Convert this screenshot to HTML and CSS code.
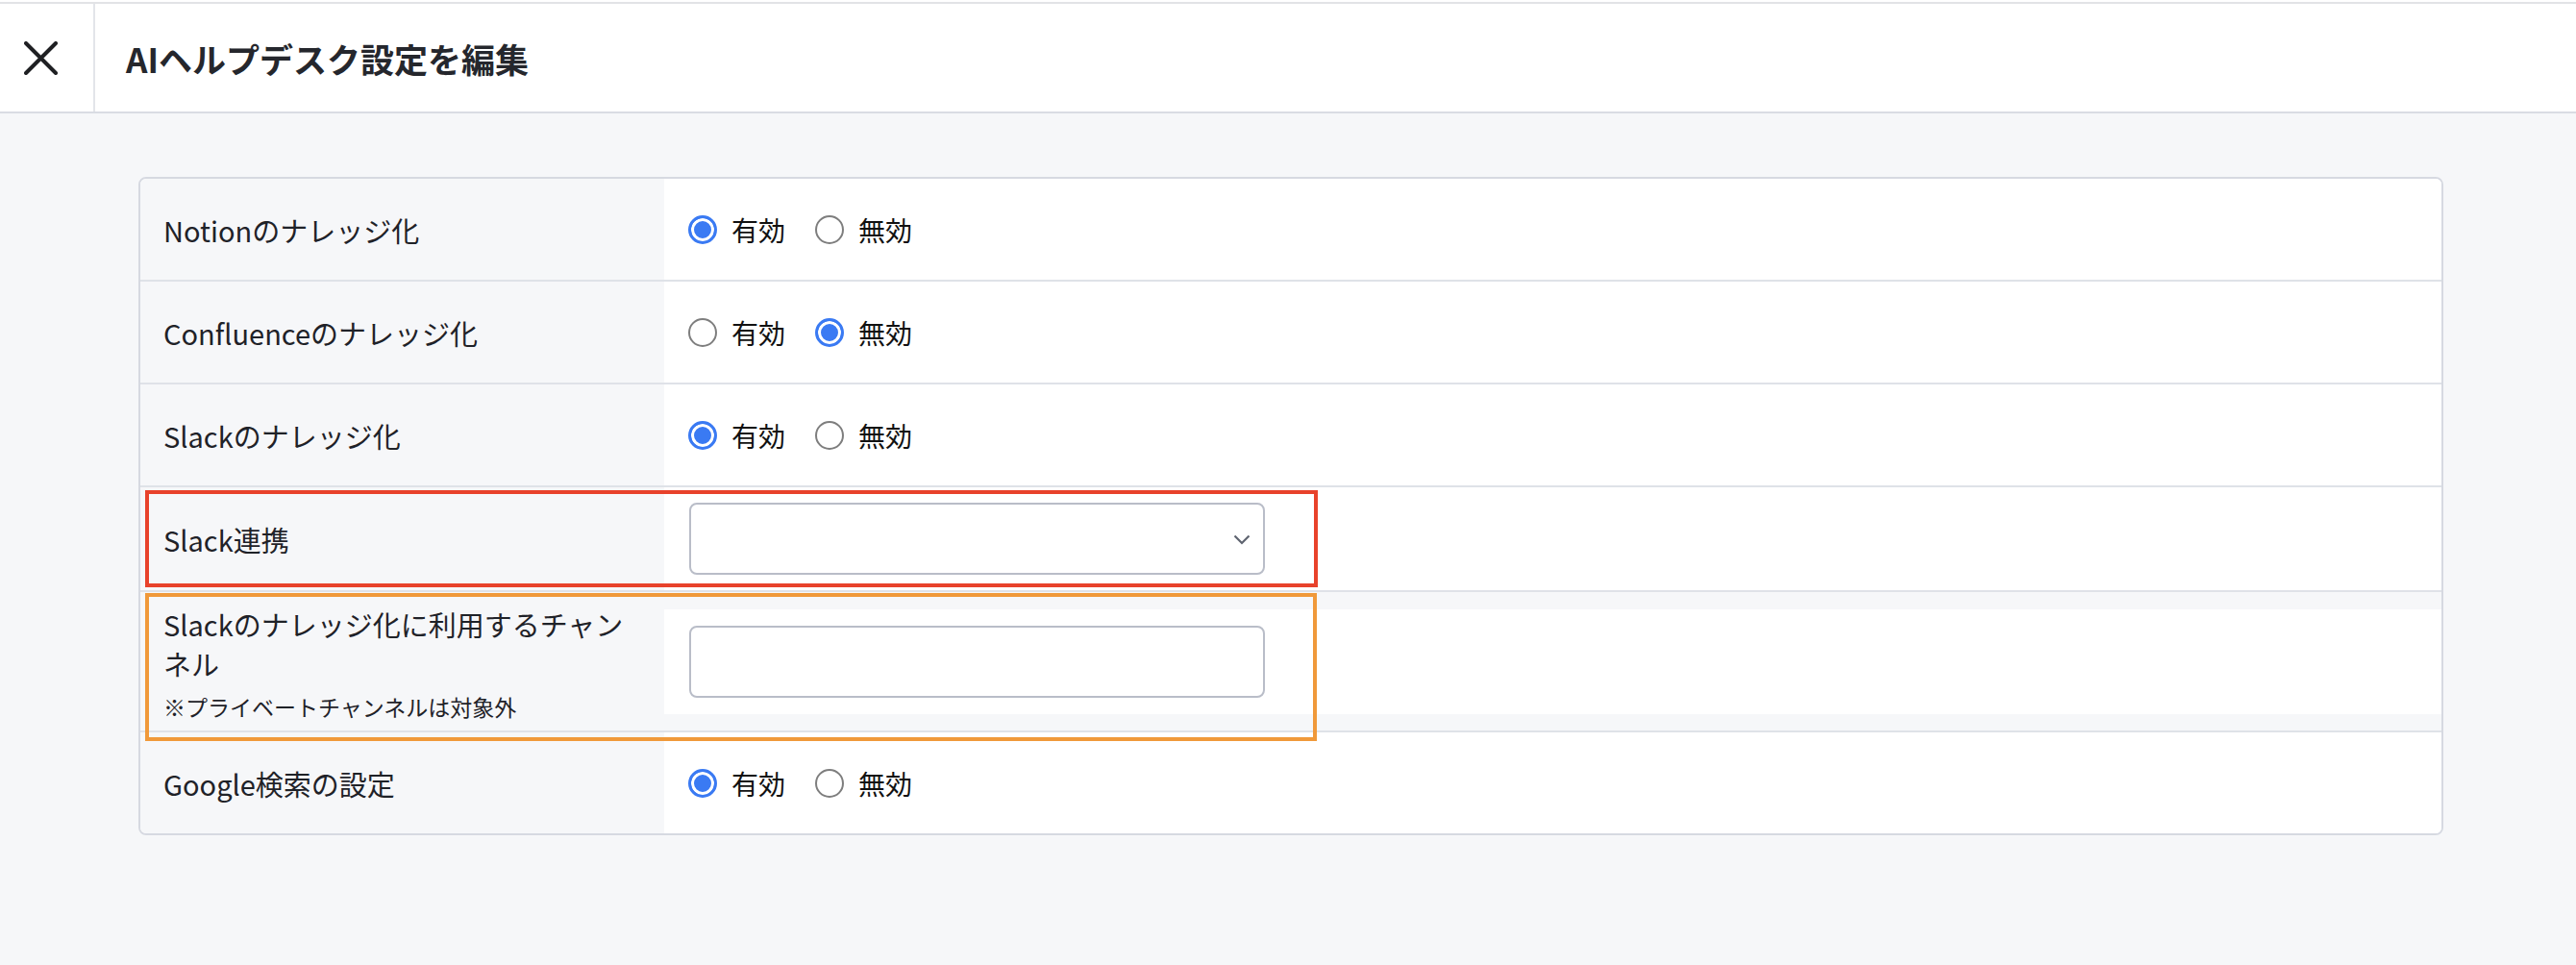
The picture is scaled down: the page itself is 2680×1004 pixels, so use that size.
FILE: index.html
```html
<!DOCTYPE html>
<html lang="ja">
<head>
  <meta charset="UTF-8">
  <title>AIヘルプデスク設定を編集</title>
  <link rel="stylesheet" href="styles.css">
</head>
<body>
  <div class="header">
    <div class="close-btn">
      <svg width="35" height="35" viewBox="0 0 35 35">
        <path d="M2 2 L33 33 M33 2 L2 33" stroke="#1f2023" stroke-width="4" stroke-linecap="round" fill="none"/>
      </svg>
    </div>
    <h1 class="title">AIヘルプデスク設定を編集</h1>
  </div>

  <div class="main">
    <div class="panel">
      <div class="row">
        <div class="label">Notionのナレッジ化</div>
        <div class="value">
          <label class="radio"><input type="radio" name="notion" checked><span>有効</span></label>
          <label class="radio"><input type="radio" name="notion"><span>無効</span></label>
        </div>
      </div>
      <div class="row">
        <div class="label">Confluenceのナレッジ化</div>
        <div class="value">
          <label class="radio"><input type="radio" name="confluence"><span>有効</span></label>
          <label class="radio"><input type="radio" name="confluence" checked><span>無効</span></label>
        </div>
      </div>
      <div class="row">
        <div class="label">Slackのナレッジ化</div>
        <div class="value">
          <label class="radio"><input type="radio" name="slack" checked><span>有効</span></label>
          <label class="radio"><input type="radio" name="slack"><span>無効</span></label>
        </div>
      </div>
      <div class="row">
        <div class="label">Slack連携</div>
        <div class="value value-select">
          <div class="select-wrap">
            <select class="field"><option></option></select>
            <svg class="chevron" width="18" height="11" viewBox="0 0 18 11">
              <path d="M1.5 1.5 L9 9 L16.5 1.5" stroke="#5f6470" stroke-width="2.2" fill="none"/>
            </svg>
          </div>
        </div>
        <div class="mark mark-red"></div>
      </div>
      <div class="row">
        <div class="label label-tall">
          Slackのナレッジ化に利用するチャンネル
          <div class="note">※プライベートチャンネルは対象外</div>
        </div>
        <div class="value value-boxed">
          <input class="field" type="text">
        </div>
        <div class="mark mark-orange"></div>
      </div>
      <div class="row">
        <div class="label">Google検索の設定</div>
        <div class="value">
          <label class="radio"><input type="radio" name="google" checked><span>有効</span></label>
          <label class="radio"><input type="radio" name="google"><span>無効</span></label>
        </div>
      </div>
    </div>
  </div>
</body>
</html>
```

FILE: styles.css
```css
body {
  margin: 0;
  border-top: 2px solid #fff;
  background: #f6f7f9;
  font-family: "Noto Sans CJK JP", "Noto Sans", sans-serif;
  color: #1f2228;
}
.header {
  display: flex;
  align-items: center;
  height: 112px;
  background: #fff;
  border-top: 2px solid #e2e3e6;
  border-bottom: 2px solid #d9dce3;
}
.close-btn {
  display: flex;
  align-items: center;
  height: 100%;
  padding: 0 37px 0 25px;
  border-right: 2px solid #e3e5ea;
}
.title {
  margin: 0 0 0 32px;
  font-size: 35px;
  font-weight: bold;
  color: #25272d;
}
.main {
  padding: 66px 138px 0 144px;
}
.panel {
  background: #fff;
  border: 2px solid #d6d9e1;
  border-radius: 8px;
  overflow: hidden;
}
.row {
  position: relative;
  display: flex;
  align-items: center;
  background: #f6f7f9;
  border-bottom: 2px solid #dfe2e8;
}
.row:last-child {
  border-bottom: none;
}
.label {
  width: 497px;
  align-self: stretch;
  display: flex;
  flex-direction: column;
  justify-content: center;
  padding: 14px 24px;
  font-size: 29px;
  line-height: 42px;
}
.label-tall {
  padding: 13px 24px 8px;
  line-height: 41px;
}
.note {
  margin-top: 7px;
  font-size: 23px;
  line-height: 34px;
}
.value {
  flex: 1;
  display: flex;
  align-items: center;
  gap: 31px;
  min-height: 75px;
  padding: 15px 24px 15px 25px;
  background: #fff;
}
.row .value-select {
  padding: 16px 24px 16px 26px;
}
.row .value-boxed {
  align-self: center;
  padding: 17px 24px 17px 26px;
}
.radio {
  display: flex;
  align-items: center;
  gap: 15px;
  font-size: 28px;
  color: #111;
}
.radio input {
  appearance: none;
  margin: 0;
  width: 30px;
  height: 30px;
  border: 2px solid #7e7e7e;
  border-radius: 50%;
  background: #fff;
}
.radio input:checked {
  border: 3px solid #3a7af3;
  background: #3a7af3;
  box-shadow: inset 0 0 0 3px #fff;
}
.select-wrap {
  position: relative;
}
.field {
  box-sizing: border-box;
  display: block;
  width: 599px;
  height: 75px;
  margin: 0;
  padding: 0 20px;
  border: 2px solid #b9bdc8;
  border-radius: 8px;
  background: #fff;
  font: inherit;
  appearance: none;
}
.chevron {
  position: absolute;
  right: 15px;
  top: 33px;
}
.mark {
  position: absolute;
  z-index: 1;
  left: 5px;
  pointer-events: none;
}
.mark-red {
  top: 3px;
  width: 1212px;
  height: 93px;
  border: 4px solid #e8422b;
}
.mark-orange {
  top: 1px;
  width: 1211px;
  height: 146px;
  border: 4px solid #f0993a;
}
```
